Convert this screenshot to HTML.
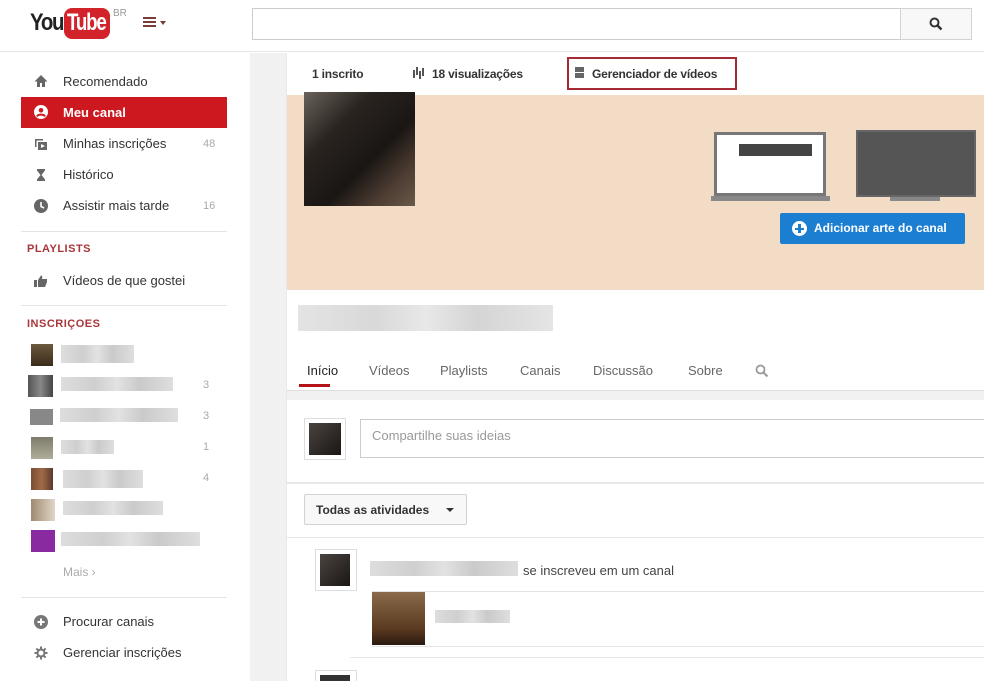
<!DOCTYPE html>
<html><head><meta charset="utf-8"><style>
*{margin:0;padding:0;box-sizing:border-box}
html,body{width:984px;height:681px;overflow:hidden}
body{background:#fff;font-family:"Liberation Sans",Arial,sans-serif;position:relative;color:#333}
.a{position:absolute}
.si{position:absolute;left:63px;font-size:13px;color:#333}
.cnt{position:absolute;left:203px;font-size:11px;color:#aaa}
.blur{position:absolute;background:linear-gradient(90deg,#ddd,#cfcfcf 30%,#e2e2e2 50%,#cacaca 70%,#dedede)}
.sep{position:absolute;left:21px;width:206px;height:1px;background:#e4e4e4}
.ic{position:absolute;left:34px;width:14px;height:14px}
.tab{position:absolute;top:363px;font-size:13px;color:#666}
</style></head><body>
<!-- header -->
<div class="a" style="left:0;top:0;width:984px;height:52px;border-bottom:1px solid #e6e6e6"></div>
<div class="a" style="left:30px;top:9px;font:bold 24px 'Liberation Sans',sans-serif;letter-spacing:-1.5px;color:#222;transform:scaleX(.85);transform-origin:left">You</div>
<div class="a" style="left:64px;top:8px;width:46px;height:31px;background:#d2232a;border-radius:8px"></div>
<div class="a" style="left:67px;top:9px;font:bold 24px 'Liberation Sans',sans-serif;letter-spacing:-1.5px;color:#fff;transform:scaleX(.78);transform-origin:left">Tube</div>
<div class="a" style="left:113px;top:8px;font-size:10px;color:#999">BR</div>
<div class="a" style="left:143px;top:17px;width:13px;height:2px;background:#7a3b3b;box-shadow:0 4px 0 #7a3b3b,0 8px 0 #7a3b3b"></div>
<div class="a" style="left:160px;top:21px;border:3px solid transparent;border-top:4px solid #7a3b3b"></div>
<div class="a" style="left:252px;top:8px;width:649px;height:32px;border:1px solid #ccc"></div>
<div class="a" style="left:900px;top:8px;width:72px;height:32px;border:1px solid #d3d3d3;background:#f8f8f8"></div>
<svg class="a" style="left:929px;top:17px" width="14" height="14" viewBox="0 0 14 14"><circle cx="5.5" cy="5.5" r="4" fill="none" stroke="#333" stroke-width="2"/><path d="M8.5 8.5L12.5 12.5" stroke="#333" stroke-width="2.5"/></svg>
<!-- gutter -->
<div class="a" style="left:250px;top:53px;width:36px;height:628px;background:#f1f1f1"></div>
<div class="a" style="left:286px;top:53px;width:698px;height:628px;border-left:1px solid #e8e8e8"></div>
<!-- sidebar -->
<svg class="ic" style="top:74px" viewBox="0 0 14 14"><path d="M7 1L0.5 7.5H3V13H6V9H8V13H11V7.5H13.5Z" fill="#666"/></svg>
<div class="si" style="top:74px">Recomendado</div>
<div class="a" style="left:21px;top:97px;width:206px;height:31px;background:#cc181e"></div>
<svg class="ic" style="top:105px" viewBox="0 0 14 14"><circle cx="7" cy="7" r="7" fill="#fff"/><circle cx="7" cy="5.3" r="2.3" fill="#cc181e"/><path d="M3 11.5C4 9 10 9 11 11.5" stroke="#cc181e" stroke-width="2" fill="none"/></svg>
<div class="si" style="top:105px;color:#fff;font-weight:bold">Meu canal</div>
<svg class="ic" style="top:137px" viewBox="0 0 14 14"><path d="M1 2h8v1.5H2.5V10H1z" fill="#666"/><rect x="4" y="5" width="9" height="8" fill="#666"/><path d="M7 7l4 2-4 2z" fill="#fff"/></svg>
<div class="si" style="top:136px">Minhas inscrições</div><div class="cnt" style="top:138px">48</div>
<svg class="ic" style="top:168px" viewBox="0 0 14 14"><path d="M3 1h8v1.5L7.5 7 11 11.5V13H3v-1.5L6.5 7 3 2.5z" fill="#666"/></svg>
<div class="si" style="top:167px">Histórico</div>
<svg class="ic" style="top:199px" viewBox="0 0 14 14"><circle cx="7" cy="7" r="7" fill="#666"/><path d="M7 3v4.5l3 1.5" stroke="#fff" stroke-width="1.6" fill="none"/></svg>
<div class="si" style="top:198px">Assistir mais tarde</div><div class="cnt" style="top:200px">16</div>
<div class="sep" style="top:231px"></div>
<div class="a" style="left:27px;top:243px;font-size:11px;font-weight:bold;color:#a8353a;letter-spacing:.5px">PLAYLISTS</div>
<svg class="ic" style="top:274px" viewBox="0 0 14 14"><rect x="0" y="6" width="3" height="7" fill="#666"/><path d="M4 6L7 1.5C8.5 1.5 8.5 3 8 5H13V8L11 13H4z" fill="#666"/></svg>
<div class="si" style="top:273px">Vídeos de que gostei</div>
<div class="sep" style="top:305px"></div>
<div class="a" style="left:27px;top:318px;font-size:11px;font-weight:bold;color:#a8353a;letter-spacing:.5px">INSCRIÇOES</div>
<div class="a" style="left:31px;top:344px;width:22px;height:22px;background:linear-gradient(#6b5a3d,#3a2a1a)"></div><div class="blur" style="left:61px;top:345px;width:73px;height:18px"></div>
<div class="a" style="left:28px;top:375px;width:25px;height:22px;background:linear-gradient(90deg,#555,#888,#444)"></div><div class="blur" style="left:61px;top:377px;width:112px;height:14px"></div><div class="cnt" style="top:379px">3</div>
<div class="a" style="left:30px;top:409px;width:23px;height:16px;background:#888"></div><div class="blur" style="left:60px;top:408px;width:118px;height:14px"></div><div class="cnt" style="top:410px">3</div>
<div class="a" style="left:31px;top:437px;width:22px;height:22px;background:linear-gradient(#7d7b6a,#b0ad9a)"></div><div class="blur" style="left:61px;top:440px;width:53px;height:14px"></div><div class="cnt" style="top:441px">1</div>
<div class="a" style="left:31px;top:468px;width:22px;height:22px;background:linear-gradient(90deg,#7a4e34,#a06a48,#5a3a2a)"></div><div class="blur" style="left:63px;top:470px;width:80px;height:18px"></div><div class="cnt" style="top:472px">4</div>
<div class="a" style="left:31px;top:499px;width:24px;height:22px;background:linear-gradient(90deg,#a08a70,#e0d6c8)"></div><div class="blur" style="left:63px;top:501px;width:100px;height:14px"></div>
<div class="a" style="left:31px;top:530px;width:24px;height:22px;background:#8a2aa0"></div><div class="blur" style="left:61px;top:532px;width:139px;height:14px"></div>
<div class="a" style="left:63px;top:565px;font-size:12px;color:#aaa">Mais ›</div>
<div class="sep" style="top:597px"></div>
<svg class="ic" style="top:615px" viewBox="0 0 14 14"><circle cx="7" cy="7" r="7" fill="#777"/><path d="M7 3.5v7M3.5 7h7" stroke="#fff" stroke-width="2"/></svg>
<div class="si" style="top:614px">Procurar canais</div>
<svg class="ic" style="top:646px" viewBox="0 0 14 14"><circle cx="7" cy="7" r="3.5" fill="none" stroke="#777" stroke-width="2"/><path d="M7 0.5v3M7 10.5v3M0.5 7h3M10.5 7h3M2.4 2.4l2.1 2.1M9.5 9.5l2.1 2.1M2.4 11.6l2.1-2.1M9.5 4.5l2.1-2.1" stroke="#777" stroke-width="2"/></svg>
<div class="si" style="top:645px">Gerenciar inscrições</div>
<!-- content stats -->
<div class="a" style="left:312px;top:67px;font-size:12px;color:#333;font-weight:bold;letter-spacing:-.2px">1 inscrito</div>
<div class="a" style="left:413px;top:70px;width:2px;height:8px;background:#555;box-shadow:3px -3px 0 #555,6px 1px 0 #555,9px -2px 0 #555"></div>
<div class="a" style="left:432px;top:67px;font-size:12px;color:#333;font-weight:bold;letter-spacing:-.2px">18 visualizações</div>
<div class="a" style="left:567px;top:57px;width:170px;height:33px;border:2px solid #a52a33"></div>
<div class="a" style="left:575px;top:67px;width:9px;height:5px;background:#666;box-shadow:0 6px 0 #666"></div>
<div class="a" style="left:592px;top:67px;font-size:12px;color:#333;font-weight:bold;letter-spacing:-.2px">Gerenciador de vídeos</div>
<!-- banner -->
<div class="a" style="left:287px;top:95px;width:697px;height:195px;background:#f3dcc6"></div>
<div class="a" style="left:304px;top:92px;width:111px;height:114px;background:linear-gradient(135deg,#6a635c,#2a2420 30%,#1a1614 60%,#4a3a30 80%,#6a5a4a)"></div>
<div class="a" style="left:714px;top:132px;width:112px;height:64px;background:#fff;border:3px solid #777"></div>
<div class="a" style="left:739px;top:144px;width:73px;height:12px;background:#444"></div>
<div class="a" style="left:711px;top:196px;width:119px;height:5px;background:#888"></div>
<div class="a" style="left:856px;top:130px;width:120px;height:67px;background:#555;border:2px solid #666"></div>
<div class="a" style="left:890px;top:197px;width:50px;height:4px;background:#888"></div>
<div class="a" style="left:780px;top:213px;width:185px;height:31px;background:#1b7ed1;border-radius:2px"></div>
<div class="a" style="left:792px;top:221px;width:15px;height:15px;border-radius:50%;background:#fff"></div>
<div class="a" style="left:795px;top:227.5px;width:9px;height:2.5px;background:#1b7ed1"></div>
<div class="a" style="left:798.3px;top:224px;width:2.5px;height:9px;background:#1b7ed1"></div>
<div class="a" style="left:814px;top:221px;font-size:12px;font-weight:bold;color:#fff">Adicionar arte do canal</div>
<!-- name blur -->
<div class="blur" style="left:298px;top:305px;width:255px;height:26px;opacity:.8"></div>
<!-- tabs -->
<div class="tab" style="left:307px;color:#222">Início</div>
<div class="tab" style="left:369px">Vídeos</div>
<div class="tab" style="left:440px">Playlists</div>
<div class="tab" style="left:520px">Canais</div>
<div class="tab" style="left:593px">Discussão</div>
<div class="tab" style="left:688px">Sobre</div>
<svg class="a" style="left:755px;top:364px" width="14" height="14" viewBox="0 0 14 14"><circle cx="5.5" cy="5.5" r="4" fill="none" stroke="#999" stroke-width="1.8"/><path d="M8.5 8.5L12.5 12.5" stroke="#999" stroke-width="2"/></svg>
<div class="a" style="left:299px;top:384px;width:31px;height:3px;background:#b31217"></div>
<div class="a" style="left:287px;top:390px;width:697px;height:10px;background:#f1f1f1;border-top:1px solid #ddd"></div>
<!-- share -->
<div class="a" style="left:304px;top:418px;width:42px;height:42px;border:1px solid #ddd;background:#fff"></div>
<div class="a" style="left:309px;top:423px;width:32px;height:32px;background:linear-gradient(135deg,#4a4440,#1a1614)"></div>
<div class="a" style="left:360px;top:419px;width:630px;height:39px;border:1px solid #ccc"></div>
<div class="a" style="left:372px;top:428px;font-size:13px;color:#999">Compartilhe suas ideias</div>
<div class="a" style="left:287px;top:482px;width:697px;height:2px;background:#e8e8e8"></div>
<div class="a" style="left:304px;top:494px;width:163px;height:31px;border:1px solid #d3d3d3;background:#f8f8f8;border-radius:2px"></div>
<div class="a" style="left:316px;top:503px;font-size:12px;font-weight:bold;color:#333">Todas as atividades</div>
<div class="a" style="left:446px;top:508px;border:4px solid transparent;border-top:4px solid #333"></div>
<div class="a" style="left:287px;top:537px;width:697px;height:1px;background:#e6e6e6"></div>
<!-- activity -->
<div class="a" style="left:315px;top:549px;width:42px;height:42px;border:1px solid #ddd"></div>
<div class="a" style="left:320px;top:554px;width:30px;height:32px;background:linear-gradient(135deg,#4a4440,#1a1614)"></div>
<div class="blur" style="left:370px;top:561px;width:148px;height:15px"></div>
<div class="a" style="left:523px;top:563px;font-size:13px;color:#444">se inscreveu em um canal</div>
<div class="a" style="left:372px;top:591px;width:612px;height:1px;background:#e4e4e4"></div>
<div class="a" style="left:372px;top:592px;width:53px;height:53px;background:linear-gradient(#8a6a4a,#5a3a20 70%,#2a1a10)"></div>
<div class="blur" style="left:435px;top:610px;width:75px;height:13px"></div>
<div class="a" style="left:372px;top:646px;width:612px;height:1px;background:#e4e4e4"></div>
<div class="a" style="left:350px;top:657px;width:634px;height:1px;background:#e8e8e8"></div>
<div class="a" style="left:315px;top:670px;width:42px;height:20px;border:1px solid #ddd"></div>
<div class="a" style="left:320px;top:675px;width:30px;height:10px;background:#333"></div>
</body></html>
